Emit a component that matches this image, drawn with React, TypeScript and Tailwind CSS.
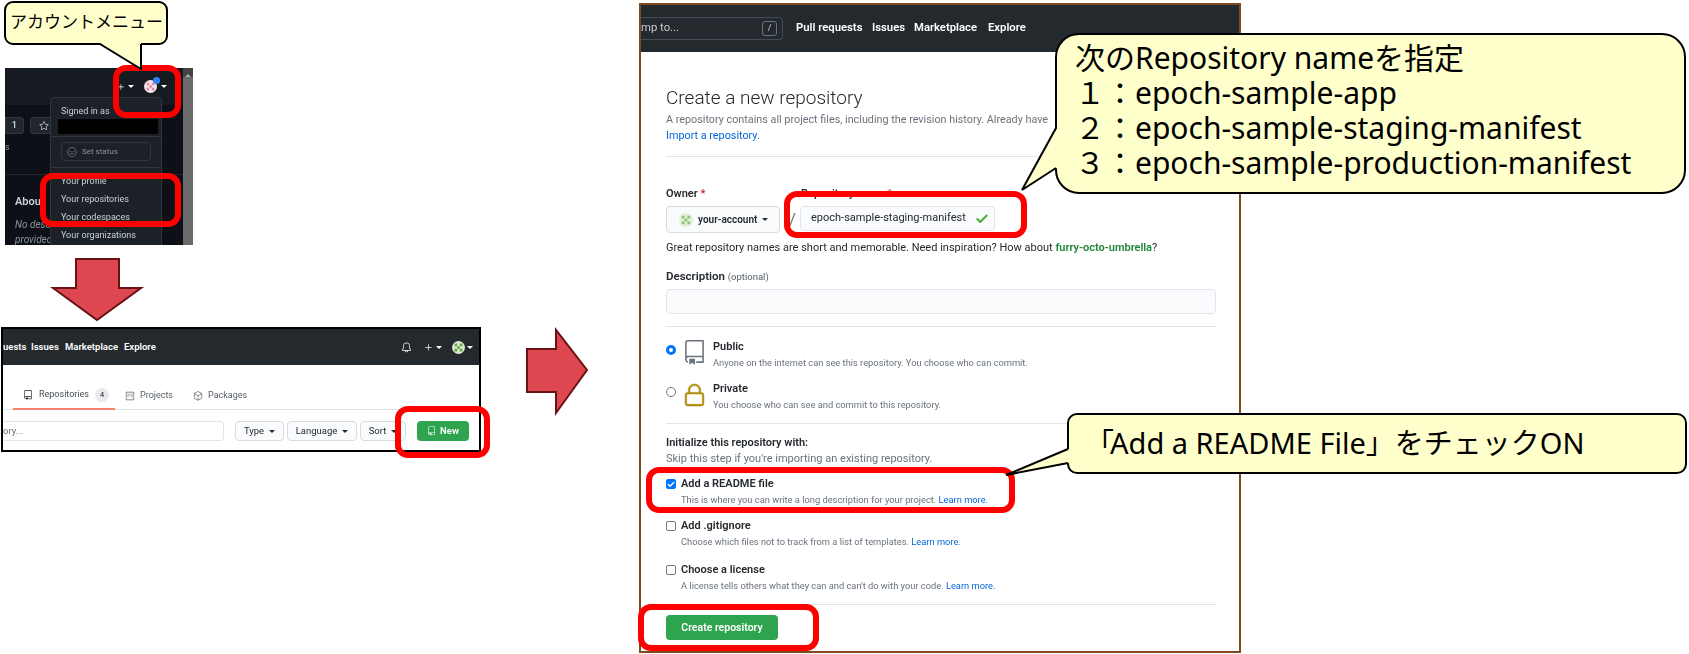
import { Check } from "lucide-react";
import { GoBell, GoLock, GoPackage, GoPlus, GoProject, GoRepo, GoSmiley, GoStar } from "react-icons/go";

const Caret = ({ className }: { className: string }) => (
  <span className={`inline-block border-x-[3px] border-t-[3px] border-x-transparent ${className}`} />
);

const Mark = ({ className }: { className: string }) => (
  <div className={`absolute border-[6px] border-[#ff0000] rounded-[13px] ${className}`} />
);

const Identicon = ({ size, bg, fg }: { size: number; bg: string; fg: string }) => (
  <svg width={size} height={size} viewBox="0 0 10 10" className="shrink-0">
    <circle cx="5" cy="5" r="5" fill={bg} />
    <path d="M2 2h2v2H2zM6 2h2v2H6zM4 4h2v2H4zM2 6h2v2H2zM6 6h2v2H6z" fill={fg} />
  </svg>
);

const AccountShot = () => (
  <div className="absolute left-[5px] top-[68px] w-[188px] h-[177px] flex overflow-hidden bg-[#0d1117] text-[9px] text-[#c9d1d9] blur-[0.4px]">
    <div className="relative flex-1 flex flex-col">
      <div className="h-[37px] bg-[#161b22] flex items-center justify-end pr-[16px] gap-[2px] shrink-0">
        <GoPlus className="w-[10px] h-[10px] text-white" />
        <Caret className="border-t-white mr-[8px]" />
        <div className="relative w-[13px] h-[13px]">
          <Identicon size={13} bg="#f4e6ec" fg="#e58aa9" />
          <div className="absolute -right-[3px] -top-[3px] w-[7px] h-[7px] rounded-full bg-[#2f81f7]" />
        </div>
        <Caret className="border-t-white ml-[2px]" />
      </div>
      <div className="h-[70px] pt-[12px] border-b border-[#21262d] shrink-0">
        <div className="flex gap-[6px]">
          <div className="w-[19px] h-[17px] rounded-r-[3px] bg-[#21262d] border border-[#30363d] flex items-center justify-end pr-[6px] font-semibold">1</div>
          <div className="w-[30px] h-[17px] rounded-[3px] bg-[#21262d] border border-[#30363d] pl-[8px] flex items-center">
            <GoStar className="w-[10px] h-[10px]" />
          </div>
        </div>
        <div className="mt-[7px] text-[#8b949e]">s</div>
      </div>
      <div className="pl-[10px] pt-[19px] font-semibold text-[11px] leading-[16px]">About</div>
      <div className="pl-[10px] pt-[7px] italic text-[#8b949e] leading-[15px] text-[10px]">No desc<br />provided</div>
      <div className="absolute left-[45px] top-[29px] w-[112px] h-[150px] bg-[#1c2128] border border-[#30363d] rounded-t-[4px] flex flex-col">
        <div className="pl-[10px] pt-[5px] leading-[16px]">Signed in as</div>
        <div className="ml-[7px] w-[100px] h-[15px] bg-black" />
        <div className="mt-[2px] border-t border-[#30363d]" />
        <div className="mx-[10px] mt-[5px] h-[19px] border border-[#30363d] rounded-[4px] flex items-center gap-[5px] pl-[5px] text-[8px] text-[#8b949e]">
          <GoSmiley className="w-[10px] h-[10px]" />
          Set status
        </div>
        <div className="mt-[6px] border-t border-[#30363d]" />
        <div className="pl-[10px] pt-[4px] leading-[18px]">Your profile</div>
        <div className="pl-[10px] leading-[18px]">Your repositories</div>
        <div className="pl-[10px] leading-[18px]">Your codespaces</div>
        <div className="pl-[10px] leading-[18px]">Your organizations</div>
      </div>
    </div>
    <div className="w-[10px] bg-[#6b6b6b] shrink-0 flex flex-col items-center">
      <div className="w-full h-[9px] bg-[#444] flex justify-center pt-[3px]">
        <span className="border-x-[3px] border-b-[3px] border-x-transparent border-b-[#aaa]" />
      </div>
    </div>
  </div>
);

const ReposShot = () => (
  <div className="absolute left-[1px] top-[327px] w-[480px] h-[125px] border-2 border-black bg-white overflow-hidden text-[9.5px]">
    <div className="blur-[0.4px]">
      <div className="h-[36px] bg-[#24292e] flex items-center text-white font-semibold">
        <span className="w-[28px]">uests</span>
        <span className="w-[34px]">Issues</span>
        <span className="w-[59px]">Marketplace</span>
        <span className="w-[277px]">Explore</span>
        <GoBell className="w-[11px] h-[11px] mr-[11px]" />
        <GoPlus className="w-[11px] h-[11px] mr-[2px]" />
        <Caret className="border-t-white mr-[10px]" />
        <Identicon size={13} bg="#dbe9d2" fg="#63a845" />
        <Caret className="border-t-white ml-[2px]" />
      </div>
      <div className="h-[45px] flex items-end border-b border-[#e1e4e8] text-[#586069] text-[9px]">
        <div className="ml-[10px] w-[102px] h-[29px] pl-[10px] -mb-px border-b-2 border-[#f9826c] flex items-center gap-[6px] text-[#24292e]">
          <GoRepo className="w-[10px] h-[10px]" />
          <span className="text-[#444d56]">Repositories</span>
          <span className="w-[14px] h-[14px] rounded-full bg-[#e8eaed] text-center leading-[14px] text-[8px]">4</span>
        </div>
        <div className="ml-[10px] h-[29px] flex items-center gap-[5px] -mb-px">
          <GoProject className="w-[10px] h-[10px]" />
          Projects
        </div>
        <div className="ml-[20px] h-[29px] flex items-center gap-[5px] -mb-px">
          <GoPackage className="w-[10px] h-[10px]" />
          Packages
        </div>
      </div>
      <div className="mt-[11px] flex items-center text-[#24292e]">
        <div className="w-[221px] h-[20px] border border-[#e1e4e8] rounded-r-[4px] border-l-0 flex items-center text-[#6a737d]">ory...</div>
        <div className="ml-[11px] w-[49px] h-[20px] border border-[#d8dbdf] rounded-[4px] bg-[#fafbfc] flex items-center justify-center gap-[5px]">Type<Caret className="border-t-[#24292e]" /></div>
        <div className="ml-[3px] w-[70px] h-[20px] border border-[#d8dbdf] rounded-[4px] bg-[#fafbfc] flex items-center justify-center gap-[5px]">Language<Caret className="border-t-[#24292e]" /></div>
        <div className="ml-[3px] w-[46px] h-[20px] border border-[#d8dbdf] rounded-[4px] bg-[#fafbfc] flex items-center justify-center gap-[5px]">Sort<Caret className="border-t-[#24292e]" /></div>
        <div className="ml-[11px] w-[52px] h-[20px] rounded-[4px] bg-[#2ea44f] text-white font-semibold flex items-center justify-center gap-[4px]">
          <GoRepo className="w-[9px] h-[10px]" />
          New
        </div>
      </div>
    </div>
  </div>
);

const Option = ({ label, text, on, className }: { label: string; text: string; on?: boolean; className: string }) => (
  <div className={`flex ${className}`}>
    <div className="w-[15px] h-[16px] flex items-center">
      <div className={`w-[10px] h-[10px] rounded-[2px] border flex items-center justify-center ${on ? "bg-[#0075ff] border-[#0075ff]" : "bg-white border-[#767676]"}`}>
        {on && <Check className="w-[9px] h-[9px] text-white" strokeWidth={4} />}
      </div>
    </div>
    <div>
      <div className="text-[11px] font-semibold leading-[16px] text-[#24292e]">{label}</div>
      <div className="text-[9.3px] leading-[15px] text-[#6a737d]">
        {text} <span className="text-[#0366d6]">Learn more.</span>
      </div>
    </div>
  </div>
);

const NewRepoShot = () => (
  <div className="absolute left-[639px] top-[3px] w-[602px] h-[650px] border-2 border-[#7b4a1e] bg-white overflow-hidden">
    <div className="h-full flex flex-col blur-[0.4px]">
      <div className="h-[47px] bg-[#24292e] shrink-0 flex items-center text-[11.3px] font-semibold text-white">
        <div className="w-[142px] h-[23px] border border-[#444d56] border-l-0 rounded-r-[4px] flex items-center justify-between pr-[5px] font-normal text-[#c8cdd2]">
          <span>mp to...</span>
          <span className="w-[15px] h-[15px] border border-[#6a737d] rounded-[3px] text-center leading-[13px] text-[9px]">/</span>
        </div>
        <span className="ml-[13px] w-[76px]">Pull requests</span>
        <span className="w-[42px]">Issues</span>
        <span className="w-[74px]">Marketplace</span>
        <span>Explore</span>
      </div>
      <div className="pl-[25px] pr-[23px] flex flex-col">
        <h2 className="mt-[34px] h-[24px] text-[19px] leading-[24px] font-light text-[#24292e]">Create a new repository</h2>
        <p className="mt-[2px] text-[10.8px] leading-[16px] text-[#6a737d] whitespace-nowrap">A repository contains all project files, including the revision history. Already have</p>
        <p className="text-[10.8px] leading-[16px] text-[#0366d6]">Import a repository.</p>
        <div className="mt-[12px] border-t border-[#e1e4e8]" />
        <div className="mt-[29px] flex text-[11px] leading-[16px] font-semibold text-[#24292e]">
          <span className="w-[135px]">Owner <span className="text-[#cb2431]">*</span></span>
          <span>Repository name <span className="text-[#cb2431]">*</span></span>
        </div>
        <div className="mt-[4px] flex items-start">
          <div className="w-[114px] h-[27px] border border-[#d8dbdf] rounded-[4px] bg-[#fafbfc] flex items-center pl-[12px] text-[10px] font-semibold text-[#24292e]">
            <div className="mr-[5px]"><Identicon size={14} bg="#e3efdc" fg="#8cc872" /></div>
            your-account
            <Caret className="ml-[5px] border-t-[#24292e]" />
          </div>
          <span className="w-[20px] pl-[5px] text-center text-[17px] leading-[27px] text-[#6a737d]">/</span>
          <div className="w-[195px] h-[25px] border border-[#e1e4e8] rounded-[4px] bg-[#fafbfc] flex items-center pl-[10px] text-[11px] text-[#24292e] whitespace-nowrap">
            epoch-sample-staging-manifest
            <Check className="ml-[9px] w-[14px] h-[14px] text-[#4caf35] shrink-0" strokeWidth={3.5} />
          </div>
        </div>
        <p className="mt-[7px] text-[11px] leading-[16px] text-[#24292e] whitespace-nowrap">
          Great repository names are short and memorable. Need inspiration? How about <span className="font-semibold text-[#22863a]">furry-octo-umbrella</span>?
        </p>
        <div className="mt-[12px] text-[11.5px] leading-[16px] font-semibold text-[#24292e]">Description <span className="font-normal text-[9.5px] text-[#586069]">(optional)</span></div>
        <div className="mt-[4px] h-[25px] border border-[#e1e4e8] rounded-[4px] bg-[#fafbfc]" />
        <div className="mt-[12px] border-t border-[#e1e4e8]" />

        <div className="mt-[12px] flex items-start">
          <div className="w-[16px] h-[22px] flex items-center">
            <div className="w-[10px] h-[10px] rounded-full border-[3px] border-[#0075ff] bg-white" />
          </div>
          <GoRepo className="w-[25px] h-[25px] mt-[1px] text-[#6a737d]" />
          <div className="ml-[6px]">
            <div className="text-[11px] font-semibold leading-[16px] text-[#24292e]">Public</div>
            <div className="text-[9.3px] leading-[16px] text-[#6a737d]">Anyone on the internet can see this repository. You choose who can commit.</div>
          </div>
        </div>
        <div className="mt-[10px] flex items-start">
          <div className="w-[16px] h-[22px] flex items-center">
            <div className="w-[10px] h-[10px] rounded-full border border-[#767676] bg-white" />
          </div>
          <GoLock className="w-[25px] h-[25px] mt-[2px] text-[#b08800]" stroke="currentColor" strokeWidth={0.5} />
          <div className="ml-[6px]">
            <div className="text-[11px] font-semibold leading-[16px] text-[#24292e]">Private</div>
            <div className="text-[9.3px] leading-[16px] text-[#6a737d]">You choose who can see and commit to this repository.</div>
          </div>
        </div>
        <div className="mt-[10px] border-t border-[#e1e4e8]" />

        <div className="mt-[11px] text-[11px] font-semibold leading-[16px] text-[#24292e]">Initialize this repository with:</div>
        <div className="text-[11px] leading-[16px] text-[#6a737d]">Skip this step if you're importing an existing repository.</div>
        <Option className="mt-[9px]" on label="Add a README file" text="This is where you can write a long description for your project." />
        <Option className="mt-[11px]" label="Add .gitignore" text="Choose which files not to track from a list of templates." />
        <Option className="mt-[13px]" label="Choose a license" text="A license tells others what they can and can't do with your code." />
        <div className="mt-[11px] border-t border-[#e1e4e8]" />
        <div className="mt-[10px] w-[112px] h-[25px] rounded-[4px] bg-[#2ea44f] text-white text-[10.5px] font-semibold flex items-center justify-center">Create repository</div>
      </div>
    </div>
  </div>
);

export default function App() {
  return (
    <div className="relative w-[1689px] h-[654px] bg-white overflow-hidden font-['Roboto','Noto_Sans_CJK_JP',sans-serif]">
      <AccountShot />
      <ReposShot />
      <NewRepoShot />

      {/* red arrows */}
      <svg className="absolute left-[50px] top-[255px]" width="95" height="68" viewBox="0 0 95 68">
        <polygon points="26,4 69,4 69,33 91,33 47,65 3,33 26,33" fill="#dc4750" stroke="#6b1015" strokeWidth="2" />
      </svg>
      <svg className="absolute left-[524px] top-[325px]" width="66" height="92" viewBox="0 0 66 92">
        <polygon points="3,24 32,24 32,5 63,45 32,88 32,67 3,67" fill="#dc4750" stroke="#6b1015" strokeWidth="2" />
      </svg>

      {/* red highlights */}
      <Mark className="left-[113px] top-[65px] w-[68px] h-[53px]" />
      <Mark className="left-[40px] top-[173px] w-[141px] h-[54px]" />
      <Mark className="left-[395px] top-[406px] w-[95px] h-[52px]" />
      <Mark className="left-[784px] top-[191px] w-[243px] h-[47px]" />
      <Mark className="left-[646px] top-[467px] w-[369px] h-[46px]" />
      <Mark className="left-[638px] top-[604px] w-[181px] h-[47px]" />

      {/* callouts */}
      <div className="absolute left-[4px] top-[1px] w-[164px] h-[44px] border-2 border-black rounded-[9px] bg-[#ffffcc] flex items-center pl-[4px] text-[17px] whitespace-nowrap text-black">
        アカウントメニュー
      </div>
      <svg className="absolute left-[95px] top-[40px]" width="52" height="32" viewBox="0 0 52 32">
        <polygon points="5,3 46,29 46,3" fill="#ffffcc" />
        <polyline points="5,4 46,29 46,4" fill="none" stroke="black" strokeWidth="2" />
      </svg>

      <div className="absolute left-[1055px] top-[33px] w-[631px] h-[161px] border-2 border-black rounded-[24px] bg-[#ffffcc] flex flex-col justify-center pl-[18px] pb-[8px] text-[30px] leading-[35px] whitespace-nowrap text-black font-['Noto_Sans','Noto_Sans_CJK_JP',sans-serif]">
        <div>次のRepository nameを指定</div>
        <div>１：epoch-sample-app</div>
        <div>２：epoch-sample-staging-manifest</div>
        <div>３：epoch-sample-production-manifest</div>
      </div>
      <svg className="absolute left-[1018px] top-[125px]" width="42" height="70" viewBox="0 0 42 70">
        <polygon points="39,3 4,65 39,43" fill="#ffffcc" />
        <polyline points="38,3 4,65 38,43" fill="none" stroke="black" strokeWidth="2" />
      </svg>

      <div className="absolute left-[1067px] top-[413px] w-[620px] h-[61px] border-2 border-black rounded-[10px] bg-[#ffffcc] flex items-center pl-[16px] pb-[2px] text-[29px] whitespace-nowrap text-black font-['Noto_Sans','Noto_Sans_CJK_JP',sans-serif]">
        <span className="tracking-[-4px]">「</span>Add a README File」をチェックON
      </div>
      <svg className="absolute left-[1003px] top-[445px]" width="68" height="34" viewBox="0 0 68 34">
        <polygon points="66,4 3,30 66,18" fill="#ffffcc" />
        <polyline points="65,4 3,30 65,18" fill="none" stroke="black" strokeWidth="2" />
      </svg>
    </div>
  );
}
